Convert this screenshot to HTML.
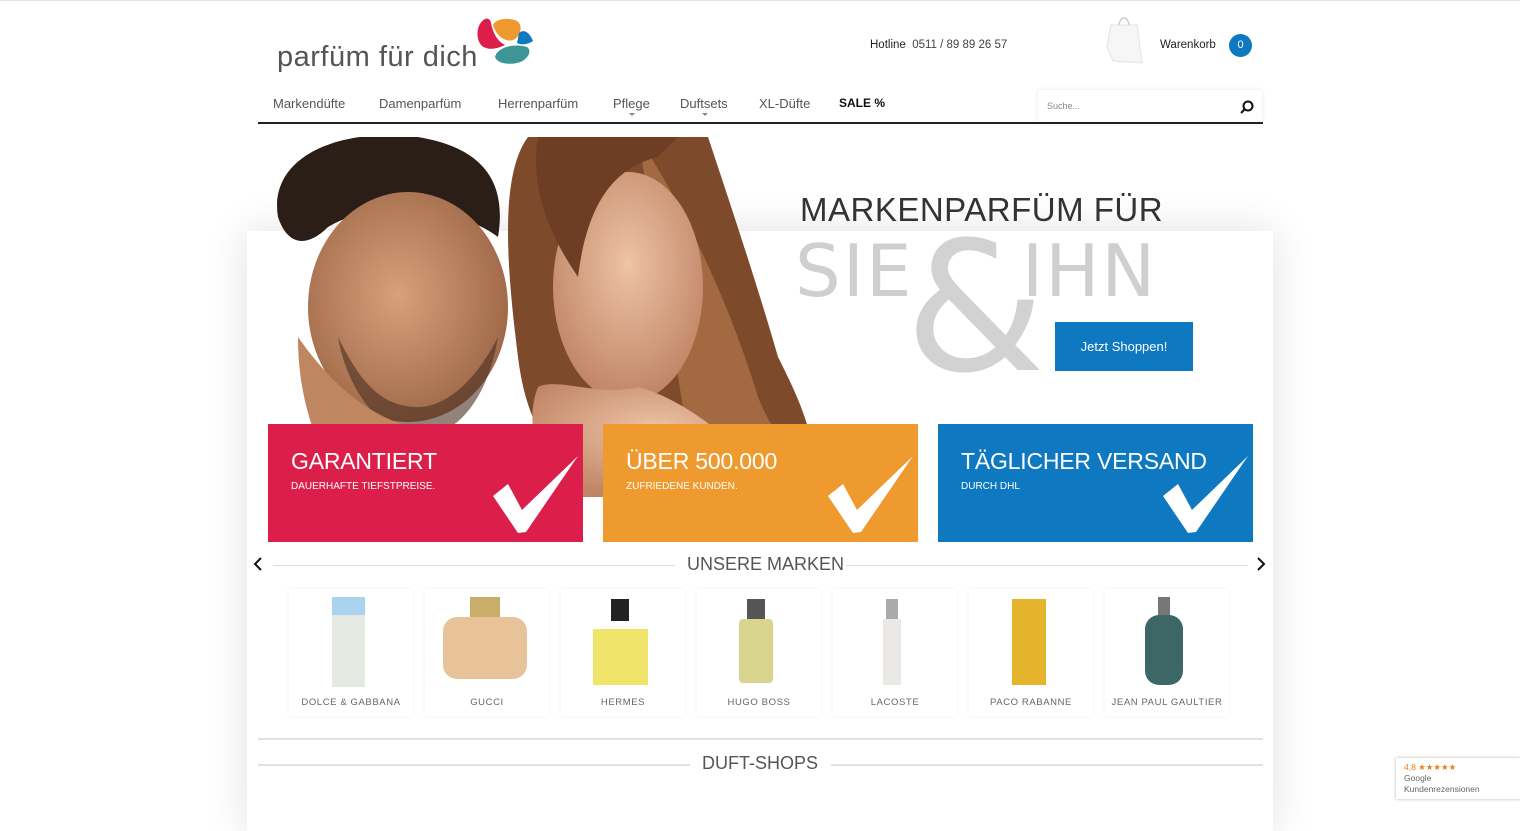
<!DOCTYPE html>
<html><head><meta charset="utf-8"><style>
*{margin:0;padding:0;box-sizing:border-box}
body{width:1520px;height:798px;overflow:hidden;background:#fff;font-family:"Liberation Sans",sans-serif;position:relative;border-top:1px solid #e4e4e4}
.a{position:absolute}
.shadow{left:247px;top:230px;width:1026px;height:600px;box-shadow:0 0 40px rgba(0,0,0,.12);background:#fff}
.nav span{position:absolute;top:95px;font-size:13px;color:#555}
.box{position:absolute;top:423px;width:315px;height:118px;color:#fff}
.box h2{position:absolute;left:23px;top:24px;font-size:23px;font-weight:normal;letter-spacing:-.2px}
.box p{position:absolute;left:23px;top:57px;font-size:10px}
.box svg{position:absolute;left:0;top:0}
.prod{position:absolute;top:588px;width:124px;height:127px;background:#fff;box-shadow:0 0 4px rgba(0,0,0,.06)}
.prod span{position:absolute;left:0;right:0;top:108px;text-align:center;font-size:9.5px;letter-spacing:.6px;color:#666}
</style></head><body>
<div class="a shadow"></div>
<div class="a" style="left:277px;top:40px;font-size:29px;color:#555;letter-spacing:.5px">parfüm für dich</div>
<svg class="a" style="left:475px;top:14px" width="62" height="52">
<path d="M10 4 C2 8 0 22 6 30 C12 36 22 34 30 30 C22 26 18 18 16 8 C15 4 13 3 10 4Z" fill="#dc1e4a"/>
<path d="M18 10 C20 4 34 2 42 6 C48 10 46 20 40 24 C34 28 22 24 18 10Z" fill="#ee9a2e"/>
<path d="M44 18 C48 14 54 16 58 26 C52 30 46 30 42 28Z" fill="#0e78c0"/>
<path d="M20 42 C22 32 40 28 52 32 C58 36 52 46 42 48 C32 50 22 48 20 42Z" fill="#3d9598"/>
</svg>
<div class="a" style="left:870px;top:38px;font-size:11.5px;color:#222">Hotline&nbsp; <span style="color:#444">0511 / 89 89 26 57</span></div>
<svg class="a" style="left:1105px;top:12px" width="40" height="52"><path d="M14 14 C14 2 24 2 24 14" stroke="#ccc" fill="none" stroke-width="1.5"/><path d="M6 12 L32 12 L37 50 L8 48 L2 34Z" fill="#f6f6f6" stroke="#e2e2e2"/></svg>
<div class="a" style="left:1160px;top:38px;font-size:11.5px;color:#222">Warenkorb</div>
<div class="a" style="left:1229px;top:33px;width:23px;height:23px;border-radius:50%;background:#0e78c0;color:#fff;font-size:11px;text-align:center;line-height:23px">0</div>
<div class="nav">
<span style="left:273px">Markendüfte</span><span style="left:379px">Damenparfüm</span><span style="left:498px">Herrenparfüm</span><span style="left:613px">Pflege</span><span style="left:680px">Duftsets</span><span style="left:759px">XL-Düfte</span><span style="left:839px;color:#111;font-weight:bold;font-size:12px">SALE %</span>
</div>
<div class="a" style="left:629px;top:112px;border:3px solid transparent;border-top-color:#888"></div>
<div class="a" style="left:702px;top:112px;border:3px solid transparent;border-top-color:#888"></div>
<div class="a" style="left:1038px;top:89px;width:224px;height:33px;background:#fff;box-shadow:0 0 4px rgba(0,0,0,.1)"></div>
<div class="a" style="left:1047px;top:100px;font-size:9px;color:#888">Suche...</div>
<svg class="a" style="left:1240px;top:99px" width="14" height="14"><circle cx="8" cy="6" r="4.5" stroke="#111" stroke-width="2" fill="none"/><path d="M5 9 L1 13" stroke="#111" stroke-width="2"/></svg>
<div class="a" style="left:258px;top:121px;width:1005px;height:2px;background:#222"></div>
<svg class="a" style="left:258px;top:136px" width="570" height="360">
<defs><radialGradient id="sk" cx=".45" cy=".45" r=".6"><stop offset="0" stop-color="#d9a07c"/><stop offset="1" stop-color="#9c6646"/></radialGradient>
<radialGradient id="sk2" cx=".5" cy=".4" r=".6"><stop offset="0" stop-color="#eec3a6"/><stop offset="1" stop-color="#c08566"/></radialGradient></defs>
<path d="M270 0 C240 40 250 140 260 220 C270 300 300 330 360 360 L560 360 C560 300 540 260 520 220 C500 150 470 60 450 0Z" fill="#7e4a2c"/>
<path d="M380 0 C420 60 470 160 500 260 C520 310 550 330 560 360 L440 360Z" fill="#a36a42"/>
<ellipse cx="370" cy="150" rx="75" ry="115" fill="url(#sk2)"/>
<path d="M280 0 C270 60 300 110 320 140 C330 60 360 30 400 20 L420 0Z" fill="#6e3e24"/>
<path d="M280 250 C260 300 300 360 300 360 L520 360 C480 300 420 260 380 250 C340 260 300 240 280 250Z" fill="url(#sk2)"/>
<path d="M20 80 C10 20 80 -10 160 0 C220 10 250 40 240 100 C200 70 120 60 70 90 C50 110 30 110 20 80Z" fill="#2b1e17"/>
<ellipse cx="150" cy="170" rx="100" ry="115" fill="url(#sk)"/>
<path d="M80 200 C90 260 130 300 160 300 C200 300 230 260 240 200 C220 240 190 270 160 270 C120 270 100 240 80 200Z" fill="#4a2e20" opacity=".6"/>
<path d="M40 200 C40 280 70 330 90 360 L300 360 C260 330 240 300 220 290 C180 300 110 300 40 200Z" fill="#bf8662"/>
</svg>
<div class="a" style="left:800px;top:190px;font-size:33px;color:#333;letter-spacing:.5px;font-family:'Liberation Sans',sans-serif">MARKENPARFÜM FÜR</div>
<div class="a" style="left:905px;top:218px;font-size:180px;color:#d2d2d2;font-family:'DejaVu Sans',sans-serif;line-height:1">&amp;</div>
<div class="a" style="left:795px;top:228px;font-size:72px;color:#cfcfcf;font-family:'DejaVu Sans',sans-serif;letter-spacing:2px">SIE</div>
<div class="a" style="left:1022px;top:228px;font-size:72px;color:#cfcfcf;font-family:'DejaVu Sans',sans-serif;letter-spacing:2px">IHN</div>
<div class="a" style="left:1055px;top:321px;width:138px;height:49px;background:#0e78c0;color:#fff;font-size:13px;text-align:center;line-height:49px">Jetzt Shoppen!</div>
<div class="box" style="left:268px;background:#dc1e4a"><svg width="315" height="118"><polygon points="225,72 240,60 254,86 310,32 258,108 250,109" fill="#fff"/></svg><h2>GARANTIERT</h2><p>DAUERHAFTE TIEFSTPREISE.</p></div>
<div class="box" style="left:603px;background:#ee9a2e"><svg width="315" height="118"><polygon points="225,72 240,60 254,86 310,32 258,108 250,109" fill="#fff"/></svg><h2>ÜBER 500.000</h2><p>ZUFRIEDENE KUNDEN.</p></div>
<div class="box" style="left:938px;background:#0e78c0"><svg width="315" height="118"><polygon points="225,72 240,60 254,86 310,32 258,108 250,109" fill="#fff"/></svg><h2>TÄGLICHER VERSAND</h2><p>DURCH DHL</p></div>
<div class="a" style="left:273px;top:564px;width:402px;height:1px;background:#ddd"></div>
<div class="a" style="left:846px;top:564px;width:402px;height:1px;background:#ddd"></div>
<div class="a" style="left:687px;top:553px;font-size:18px;color:#555">UNSERE MARKEN</div>
<svg class="a" style="left:252px;top:555px" width="12" height="16"><path d="M9 2 L3 8 L9 14" stroke="#111" stroke-width="2" fill="none"/></svg>
<svg class="a" style="left:1255px;top:555px" width="12" height="16"><path d="M3 2 L9 8 L3 14" stroke="#111" stroke-width="2" fill="none"/></svg>
<div class="prod" style="left:289px"><div class="a" style="left:43px;top:8px;width:33px;height:18px;background:#a9d3ee"></div><div class="a" style="left:43px;top:26px;width:33px;height:72px;background:#e6e8e2"></div><span>DOLCE &amp; GABBANA</span></div>
<div class="prod" style="left:425px"><div class="a" style="left:45px;top:8px;width:30px;height:20px;background:#c9ae6a"></div><div class="a" style="left:18px;top:28px;width:84px;height:62px;background:#e8c39a;border-radius:14px"></div><span>GUCCI</span></div>
<div class="prod" style="left:561px"><div class="a" style="left:50px;top:10px;width:18px;height:22px;background:#222"></div><div class="a" style="left:32px;top:40px;width:55px;height:56px;background:#f1e46a"></div><span>HERMES</span></div>
<div class="prod" style="left:697px"><div class="a" style="left:50px;top:10px;width:18px;height:20px;background:#555"></div><div class="a" style="left:42px;top:30px;width:34px;height:64px;background:#d9d48e;border-radius:4px"></div><span>HUGO BOSS</span></div>
<div class="prod" style="left:833px"><div class="a" style="left:53px;top:10px;width:12px;height:20px;background:#aaa"></div><div class="a" style="left:50px;top:30px;width:18px;height:66px;background:#ebe9e6"></div><span>LACOSTE</span></div>
<div class="prod" style="left:969px"><div class="a" style="left:43px;top:10px;width:34px;height:86px;background:#e4b52c"></div><span>PACO RABANNE</span></div>
<div class="prod" style="left:1105px"><div class="a" style="left:53px;top:8px;width:12px;height:20px;background:#777"></div><div class="a" style="left:40px;top:26px;width:38px;height:70px;background:#3d6666;border-radius:14px"></div><span>JEAN PAUL GAULTIER</span></div>
<div class="a" style="left:258px;top:737px;width:1005px;height:2px;background:#e2e2e2"></div>
<div class="a" style="left:258px;top:763px;width:432px;height:2px;background:#e2e2e2"></div>
<div class="a" style="left:831px;top:763px;width:432px;height:2px;background:#e2e2e2"></div>
<div class="a" style="left:702px;top:752px;font-size:18px;color:#555">DUFT-SHOPS</div>
<div class="a" style="left:1396px;top:757px;width:124px;height:41px;background:#fff;box-shadow:0 0 3px rgba(0,0,0,.3);padding:4px 8px;font-size:8.5px;color:#666;line-height:11px"><span style="color:#e67e22">4,8 ★★★★★</span><br>Google<br>Kundenrezensionen</div>
</body></html>
